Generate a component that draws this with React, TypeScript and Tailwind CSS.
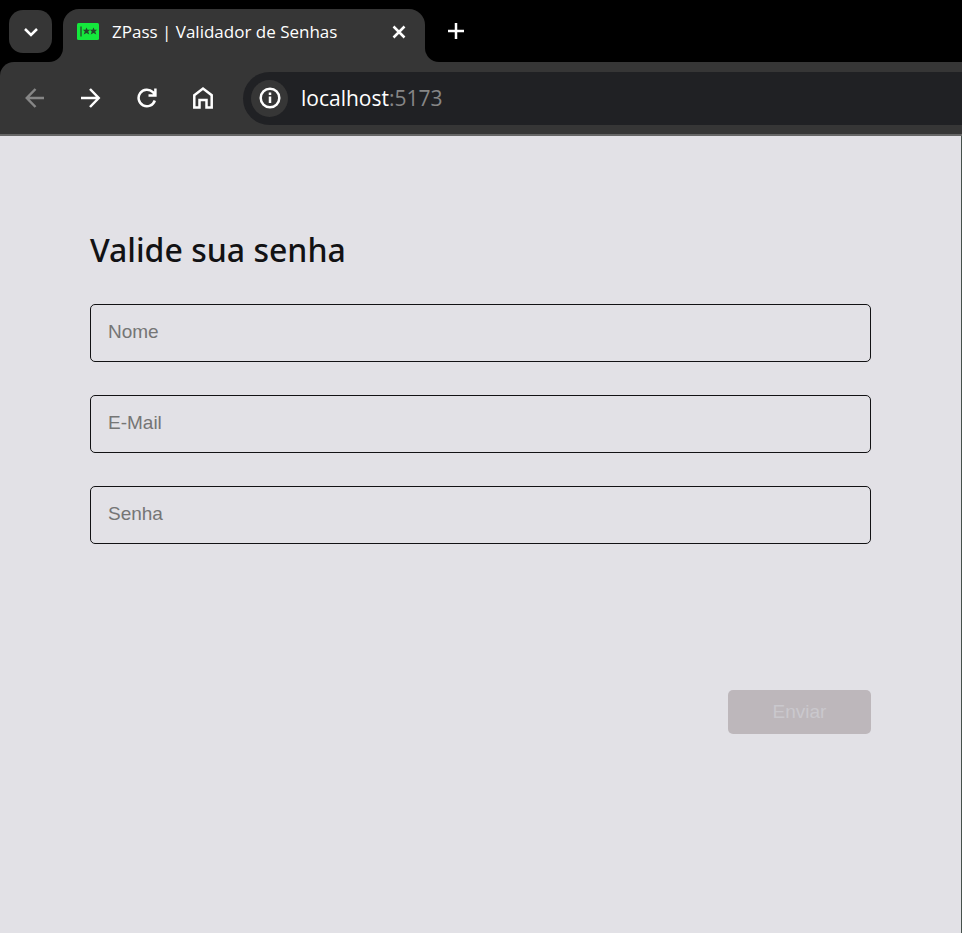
import React from "react";

const fields = [
  { id: "nome", label: "Nome", type: "text" },
  { id: "email", label: "E-Mail", type: "email" },
  { id: "senha", label: "Senha", type: "password" },
];

function Icon({ size, children }: { size: number; children: React.ReactNode }) {
  return (
    <svg
      width={size}
      height={size}
      viewBox={`0 0 ${size} ${size}`}
      fill="none"
      stroke="currentColor"
      strokeWidth={2.5}
      aria-hidden="true"
    >
      {children}
    </svg>
  );
}

function TabStrip() {
  return (
    <div className="flex h-[62px] items-end bg-black pl-[9px]">
      <button
        type="button"
        aria-label="Pesquisar guias"
        className="z-10 mb-[9px] flex size-[43px] items-center justify-center rounded-[14px] bg-[#363636] text-white"
      >
        <Icon size={20}>
          <path d="M4 7l6 6 6-6" />
        </Icon>
      </button>
      <div className="-ml-1 size-[15px] bg-[#363636]">
        <div className="size-full rounded-br-[14px] bg-black" />
      </div>
      <div className="flex h-[53px] w-[362px] items-center rounded-t-[16px] bg-[#363636] pr-3 pb-[8px] pl-[14px] text-white">
        <svg width="22" height="17" viewBox="0 0 22 17" aria-hidden="true">
          <rect width="22" height="17" rx="1.5" fill="#14e83c" />
          <path d="M4 3.500v10" stroke="#26452c" strokeWidth="1.3" />
          <g fill="#26452c">
            <path d="M9.500 4.500l1 2.300 2.600 0-1.900 1.800 1.100 2.900-2.800-1.600-2.800 1.600 1.100-2.900-1.900-1.800 2.600 0z" />
            <path d="M16.500 4.500l1 2.300 2.600 0-1.900 1.800 1.100 2.900-2.800-1.600-2.800 1.600 1.100-2.900-1.900-1.800 2.600 0z" />
          </g>
        </svg>
        <span className="ml-[13px] flex-1 text-[17px] leading-6 whitespace-nowrap">ZPass | Validador de Senhas</span>
        <button type="button" aria-label="Fechar guia" className="flex size-7 items-center justify-center">
          <Icon size={14}>
            <path d="M1.500 1.500l11 11M12.500 1.500l-11 11" />
          </Icon>
        </button>
      </div>
      <div className="size-[15px] bg-[#363636]">
        <div className="size-full rounded-bl-[14px] bg-black" />
      </div>
      <button type="button" aria-label="Nova guia" className="mb-[17px] flex size-[28px] items-center justify-center pl-1 text-white">
        <Icon size={18}>
          <path d="M9 1v16M1 9h16" />
        </Icon>
      </button>
    </div>
  );
}

function Toolbar() {
  return (
    <div className="bg-black">
      <div className="flex h-[74px] items-center rounded-tl-[14px] border-b-2 border-[#666666] bg-[#363636] pl-[21px]">
        <nav className="flex gap-[28px] text-white">
          <button type="button" aria-label="Voltar" disabled className="flex size-7 items-center justify-center text-[#868686]">
            <Icon size={20}>
              <path d="M19 10H2M10.500 1L1.800 10l8.700 9" />
            </Icon>
          </button>
          <button type="button" aria-label="Avançar" className="flex size-7 items-center justify-center">
            <Icon size={20}>
              <path d="M0 10H17.500M9 1l8.700 9-8.700 9" />
            </Icon>
          </button>
          <button type="button" aria-label="Recarregar" className="flex size-7 items-center justify-center">
            <Icon size={20}>
              <path d="M17.800 12.500A8.300 8.300 0 1 1 15.900 4.200L18 6.500M18.400 0.500V7.400H11.500" />
            </Icon>
          </button>
          <button type="button" aria-label="Página inicial" className="flex size-7 items-center justify-center">
            <Icon size={22}>
              <path d="M2.300 8.200L11 1.600l8.700 6.600v12.300h-5.200v-7.400h-7v7.400H2.300z" />
            </Icon>
          </button>
        </nav>
        <div className="ml-[26px] flex h-[53px] flex-1 items-center rounded-l-full bg-[#202124] pl-2">
          <button
            type="button"
            aria-label="Informações do site"
            className="flex size-[37px] items-center justify-center rounded-full bg-[#363636] text-white"
          >
            <Icon size={22}>
              <circle cx="11" cy="11" r="9.300" />
              <path d="M11 9.500v6.500M11 5.500v2.500" />
            </Icon>
          </button>
          <p className="ml-[13px] text-[21px] leading-8 text-white">
            localhost<span className="text-[#868686]">:5173</span>
          </p>
        </div>
      </div>
    </div>
  );
}

export default function App() {
  return (
    <div className="flex min-h-screen flex-col bg-[#e2e1e6] font-['Open_Sans','Noto_Sans',sans-serif]">
      <header>
        <TabStrip />
        <Toolbar />
      </header>
      <main className="flex-1 border-r border-[#46514c] px-[90px] pt-[90px]">
        <h1 className="font-['Noto_Sans','Open_Sans',sans-serif] text-[32px] leading-[48px] font-medium text-[#121214]">
          Valide sua senha
        </h1>
        <form className="mt-[30px] flex flex-col font-['Liberation_Sans',Arial,sans-serif] text-[19px]">
          <div className="flex flex-col gap-[33px]">
            {fields.map((field) => (
              <input
                key={field.id}
                id={field.id}
                type={field.type}
                aria-label={field.label}
                placeholder={field.label}
                className="block h-[58px] w-full rounded-[5px] border border-[#121214] bg-transparent px-[17px] pb-[2px] text-[#121214] placeholder:text-[#757575]"
              />
            ))}
          </div>
          <button
            type="submit"
            disabled
            className="mt-[146px] h-[44px] w-[143px] self-end rounded-[5px] bg-[#bdb7bb] text-[#cac8cd]"
          >
            Enviar
          </button>
        </form>
      </main>
    </div>
  );
}
